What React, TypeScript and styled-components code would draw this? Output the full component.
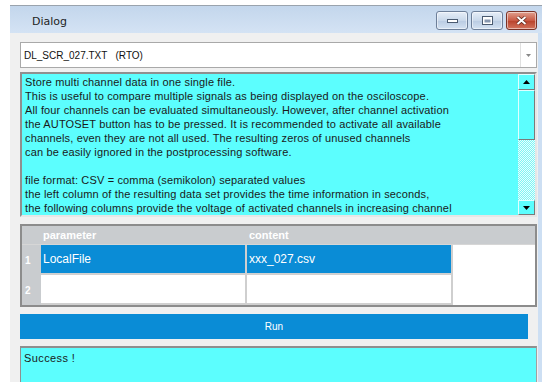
import React from 'react';
import styled, { createGlobalStyle } from 'styled-components';

const GlobalStyle = createGlobalStyle`
  html, body {
    margin: 0;
    padding: 0;
    background: #ffffff;
  }
  body {
    font-family: "Liberation Sans", Arial, sans-serif;
  }
`;

const Page = styled.div`
  width: 550px;
  height: 389px;
  overflow: hidden;
  background: #ffffff;
  padding: 5px 0 0 10px;
  box-sizing: border-box;
`;

const Window = styled.div`
  width: 532px;
  height: 376px;
  display: flex;
  flex-direction: column;
  border-top: 1px solid #9aa3ad;
  background: #cddff3;
`;

const TitleBar = styled.div`
  height: 27px;
  display: flex;
  align-items: center;
  justify-content: space-between;
  padding: 0 5px 0 22px;
  background: linear-gradient(#c3d6ec, #d4e3f4);
`;

const Title = styled.span`
  font-family: "DejaVu Sans", sans-serif;
  font-size: 11px;
  color: #1e1e1e;
  padding-top: 3px;
`;

const Controls = styled.div`
  display: flex;
  gap: 3px;
  margin-top: 2px;
`;

const CtrlButton = styled.div<{ $close?: boolean; $w: number }>`
  width: ${p => p.$w}px;
  height: 17px;
  border-radius: 3px;
  border: 1px solid ${p => (p.$close ? '#7a3226' : '#6d7f99')};
  background: ${p =>
    p.$close
      ? 'linear-gradient(#e0a08e, #c95a44 50%, #b8412a 51%, #d2735c)'
      : 'linear-gradient(#e6eef8, #c9d8ea 50%, #b9cbe2 51%, #d4e2f2)'};
  display: flex;
  align-items: center;
  justify-content: center;
  box-shadow: inset 0 0 0 1px rgba(255, 255, 255, 0.5);
`;

const Body = styled.div`
  flex: 1;
  display: flex;
  flex-direction: column;
  gap: 4px;
  background: #f0f0f0;
  margin-right: 4px;
  padding: 9px 1px 0 10px;
`;

const Combo = styled.div`
  height: 26px;
  box-sizing: border-box;
  display: flex;
  align-items: center;
  background: #ffffff;
  border: 1px solid #a9a9a9;
  font-size: 10px;
  color: #111;
`;

const ComboText = styled.span`
  flex: 1;
  padding-left: 3px;
  white-space: pre;
`;

const ComboArrow = styled.div`
  width: 15px;
  height: 100%;
  border-left: 1px solid #e0e0e0;
  display: flex;
  align-items: center;
  justify-content: center;
`;

const TextArea = styled.div`
  height: 141px;
  display: flex;
  border: 2px solid;
  border-color: #8f8f8f #e6e6e6 #e6e6e6 #8f8f8f;
  background: #5cfefe;
`;

const TextLines = styled.div`
  flex: 1;
  padding: 1px 0 0 3px;
  font-size: 11px;
  letter-spacing: 0.15px;
  line-height: 14px;
  color: #1a1a1a;
  white-space: pre;
  overflow: hidden;
`;

const ScrollBar = styled.div`
  width: 17px;
  display: flex;
  flex-direction: column;
  background: repeating-conic-gradient(#7ff4f4 0% 25%, #e8ffff 0% 50%) 0 0 / 2px 2px;
`;

const ScrollBtn = styled.div<{ $h: number }>`
  height: ${p => p.$h}px;
  box-sizing: border-box;
  background: #5cfefe;
  border: 1px solid;
  border-color: #e0ffff #7a7a7a #7a7a7a #e0ffff;
  display: flex;
  align-items: center;
  justify-content: center;
`;

const Track = styled.div`
  flex: 1;
`;

const Grid = styled.div`
  margin-top: 3px;
  display: grid;
  grid-template-columns: 19px 206px 206px 1fr;
  grid-template-rows: 19px 30px 30px;
  border: 2px solid #8c8c8c;
  background: #ffffff;
  font-size: 12px;
`;

const HeadCell = styled.div`
  background: #c9cccf;
  color: #ffffff;
  font-weight: bold;
  font-size: 11px;
  padding-left: 2px;
  display: flex;
  align-items: center;
  border-bottom: 1px solid #d6d6d6;
`;

const RowNum = styled.div`
  background: #c9cccf;
  color: #ffffff;
  font-weight: bold;
  display: flex;
  align-items: center;
  padding-left: 3px;
  font-size: 10px;
`;

const Cell = styled.div<{ $sel?: boolean }>`
  background: ${p => (p.$sel ? '#0a8cd6' : '#ffffff')};
  color: #ffffff;
  display: flex;
  align-items: center;
  padding-left: 2px;
  border-right: 2px solid #cfcfcf;
  border-bottom: 2px solid #d0d0d0;
`;

const Blank = styled.div`
  grid-row: span 2;
  background: #ffffff;
`;

const RunButton = styled.div`
  margin: 3px 9px 0 0;
  height: 25px;
  background: #0a8cd6;
  color: #ffffff;
  font-size: 10px;
  display: flex;
  align-items: center;
  justify-content: center;
`;

const Status = styled.div`
  margin-top: 3px;
  flex: 1;
  border-top: 2px solid #8f8f8f;
  border-left: 1px solid #8f8f8f;
  border-right: 1px solid #a0a0a0;
  background: #5cfefe;
  font-size: 11px;
  letter-spacing: 0.4px;
  color: #1a1a1a;
  padding: 4px 0 0 3px;
`;

const description = [
  'Store multi channel data in one single file.',
  'This is useful to compare multiple signals as being displayed on the osciloscope.',
  'All four channels can be evaluated simultaneously. However, after channel activation',
  'the AUTOSET button has to be pressed. It is recommended to activate all available',
  'channels, even they are not all used. The resulting zeros of unused channels',
  'can be easily ignored in the postprocessing software.',
  '',
  'file format: CSV = comma (semikolon) separated values',
  'the left column of the resulting data set provides the time information in seconds,',
  'the following columns provide the voltage of activated channels in increasing channel',
].join('\n');

const Tri: React.FC<{ down?: boolean }> = ({ down }) => (
  <svg width="7" height="4" viewBox="0 0 7 4">
    <polygon points={down ? '0,0 7,0 3.5,4' : '0,4 7,4 3.5,0'} fill="#000" />
  </svg>
);

export default function App() {
  return (
    <Page>
      <GlobalStyle />
      <Window>
        <TitleBar>
          <Title>Dialog</Title>
          <Controls>
            <CtrlButton $w={30}>
              <svg width="11" height="4"><rect x="0.5" y="0.5" width="10" height="3" fill="#fff" stroke="#4a5a70" /></svg>
            </CtrlButton>
            <CtrlButton $w={30}>
              <svg width="11" height="9"><rect x="0.5" y="0.5" width="10" height="8" fill="#fff" stroke="#4a5a70" /><rect x="2.5" y="3.5" width="6" height="3" fill="#8898b0" /></svg>
            </CtrlButton>
            <CtrlButton $w={29} $close>
              <svg width="11" height="9" viewBox="0 0 11 9">
                <path d="M1.5 1 L9.5 8 M9.5 1 L1.5 8" stroke="#5a2418" strokeWidth="3.4" />
                <path d="M1.5 1 L9.5 8 M9.5 1 L1.5 8" stroke="#fff" strokeWidth="2" />
              </svg>
            </CtrlButton>
          </Controls>
        </TitleBar>
        <Body>
          <Combo>
            <ComboText>DL_SCR_027.TXT   (RTO)</ComboText>
            <ComboArrow>
              <svg width="5" height="3"><polygon points="0,0 5,0 2.5,3" fill="#888" /></svg>
            </ComboArrow>
          </Combo>
          <TextArea>
            <TextLines>{description}</TextLines>
            <ScrollBar>
              <ScrollBtn $h={16}><Tri /></ScrollBtn>
              <ScrollBtn $h={50} />
              <Track />
              <ScrollBtn $h={15}><Tri down /></ScrollBtn>
            </ScrollBar>
          </TextArea>
          <Grid>
            <HeadCell />
            <HeadCell>parameter</HeadCell>
            <HeadCell>content</HeadCell>
            <HeadCell />
            <RowNum>1</RowNum>
            <Cell $sel>LocalFile</Cell>
            <Cell $sel>xxx_027.csv</Cell>
            <Blank />
            <RowNum>2</RowNum>
            <Cell />
            <Cell />
          </Grid>
          <RunButton>Run</RunButton>
          <Status>Success !</Status>
        </Body>
      </Window>
    </Page>
  );
}
